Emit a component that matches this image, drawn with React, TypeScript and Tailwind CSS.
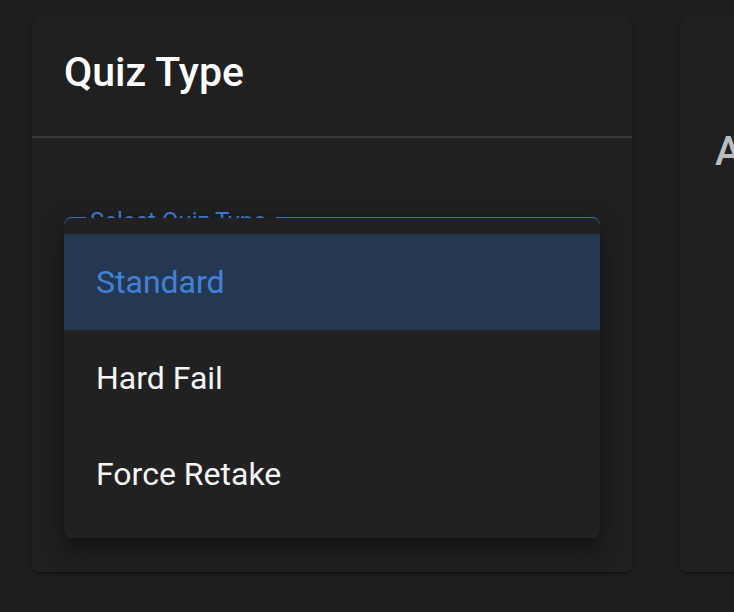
import React from 'react';

const options = ['Standard', 'Hard Fail', 'Force Retake'];

export default function App() {
  const selected = 'Standard';

  return (
    <div className="h-[612px] w-[734px] overflow-hidden bg-[#1e1e1e] font-['Roboto',sans-serif]">
      <div className="flex gap-12 pl-8 pt-4">
        {/* Quiz type card */}
        <div className="flex h-[556px] w-[600px] shrink-0 flex-col rounded-[8px] bg-[#202020] shadow-[0_4px_2px_-2px_rgba(0,0,0,0.2),0_2px_2px_0_rgba(0,0,0,0.14),0_2px_6px_0_rgba(0,0,0,0.12)]">
          <div className="h-[120px] px-8 pt-[29px]">
            <h2 className="text-[41px] font-medium leading-[54px] text-white">Quiz Type</h2>
          </div>
          <div className="h-[2px] bg-[#383838]"></div>
          <div className="px-8 pt-[79px]">
            <div className="relative h-[112px] rounded-[8px] border-2 border-[#3b78d0]">
              <span className="absolute left-[20px] top-[2px] -translate-y-1/2 bg-[#202020] pl-[4px] pr-[10px] text-[24px] leading-none text-[#3d7dd6]">
                Select Quiz Type
              </span>

              {/* open dropdown menu */}
              <div className="absolute -left-[2px] -right-[2px] top-[-1px] z-10 rounded-[8px] bg-[#212121] py-4 shadow-[0_10px_10px_-6px_rgba(0,0,0,0.25),0_16px_20px_2px_rgba(0,0,0,0.16),0_6px_28px_4px_rgba(0,0,0,0.14)]">
                {options.map(opt => (
                  <div
                    key={opt}
                    className={`flex h-[96px] items-center px-8 text-[32px] ${opt === selected ? 'bg-[#253851] text-[#4082d9]' : 'text-[#f5f5f5]'}`}
                  >
                    {opt}
                  </div>
                ))}
              </div>
            </div>
          </div>
        </div>

        {/* Second card, mostly off screen */}
        <div className="h-[556px] w-[400px] shrink-0 rounded-[8px] bg-[#202020] pl-[35px] pt-[108px] shadow-[0_4px_2px_-2px_rgba(0,0,0,0.2),0_2px_2px_0_rgba(0,0,0,0.14),0_2px_6px_0_rgba(0,0,0,0.12)]">
          <h3 className="text-[40px] font-medium leading-[56px] text-[#bdbdbd]">Attempts</h3>
        </div>
      </div>
    </div>
  );
}
